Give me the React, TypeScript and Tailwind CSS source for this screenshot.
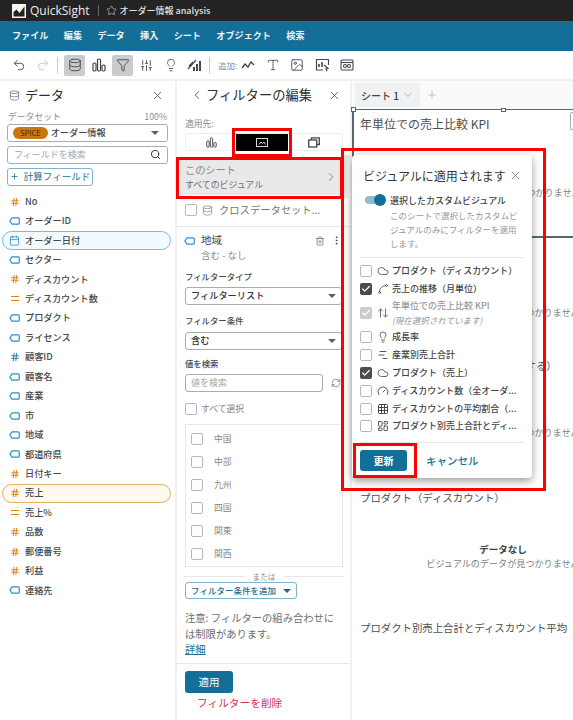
import {
  Undo2, Redo2, Database, Funnel, SlidersVertical, Lightbulb, Type, Image, X, ChevronLeft, ChevronRight,
  ChevronDown, Search, Plus, Trash2, EllipsisVertical, RefreshCw, Cloud, Gauge, Grid3x3, Check, Star,
  Hash, Calendar, ArrowUpDown, Spline, ChartNoAxesGantt, LayoutDashboard,
} from "lucide-react";

const fields = [
  { name: "No", kind: "hash" },
  { name: "オーダーID", kind: "tag" },
  { name: "オーダー日付", kind: "date" },
  { name: "セクター", kind: "tag" },
  { name: "ディスカウント", kind: "hash" },
  { name: "ディスカウント数", kind: "calc" },
  { name: "プロダクト", kind: "tag" },
  { name: "ライセンス", kind: "tag" },
  { name: "顧客ID", kind: "hashBlue" },
  { name: "顧客名", kind: "tag" },
  { name: "産業", kind: "tag" },
  { name: "市", kind: "tag" },
  { name: "地域", kind: "tag" },
  { name: "都道府県", kind: "tag" },
  { name: "日付キー", kind: "hash" },
  { name: "売上", kind: "hash" },
  { name: "売上%", kind: "calc" },
  { name: "品数", kind: "hash" },
  { name: "郵便番号", kind: "hash" },
  { name: "利益", kind: "hash" },
  { name: "連絡先", kind: "tag" },
];

const regions = ["中国", "中部", "九州", "四国", "関東", "関西"];

function TagIcon() {
  return (
    <svg width="11" height="8" viewBox="0 0 11 8" fill="none" className="shrink-0">
      <path d="M3 .8h6.2a1 1 0 0 1 1 1v4.4a1 1 0 0 1-1 1H3L.8 4z" stroke="#2e8fc4" strokeWidth="1.2" strokeLinejoin="round" />
    </svg>
  );
}

function FieldIcon({ kind }: { kind: string }) {
  if (kind === "tag") return <TagIcon />;
  if (kind === "hash") return <Hash size={10} strokeWidth={2.4} className="text-[#d9861e] shrink-0" />;
  if (kind === "hashBlue") return <Hash size={10} strokeWidth={2.4} className="text-[#2e7fb0] shrink-0" />;
  if (kind === "date") return <Calendar size={11} strokeWidth={1.7} className="text-[#2e8fc4] shrink-0" />;
  return <div className="w-[8px] h-[5px] border-y-[1.3px] border-[#d9861e] shrink-0" />;
}

function FieldRow({ name, kind }: { name: string; kind: string }) {
  const shape =
    name === "オーダー日付"
      ? "border border-[#7fbad9] bg-[#f3fafd]"
      : name === "売上"
        ? "border border-[#e8ad68] bg-[#fff9f0]"
        : "border border-transparent";
  return (
    <div className={`h-[19.45px] mx-[2px] w-[169px] flex items-center gap-[5px] pl-[6px] rounded-full text-[9.2px] font-medium text-[#45494d] ${shape}`}>
      <div className="w-[11px] flex justify-center shrink-0">
        <FieldIcon kind={kind} />
      </div>
      <span>{name}</span>
    </div>
  );
}

function Box({ on, muted }: { on?: boolean; muted?: boolean }) {
  if (on) {
    return (
      <div className={`w-[12px] h-[12px] rounded-[2px] flex items-center justify-center shrink-0 ${muted ? "bg-[#c9cbcc]" : "bg-[#4a4d50]"}`}>
        <Check size={10} strokeWidth={3} className="text-white" />
      </div>
    );
  }
  return <div className="w-[12px] h-[12px] rounded-[2px] border border-[#b5b8ba] bg-white shrink-0" />;
}

function Caret() {
  return <div className="w-0 h-0 border-x-[4px] border-x-transparent border-t-[4px] border-t-[#5b6065]" />;
}

function SelectBox({ label }: { label: string }) {
  return (
    <div className="h-[18px] w-[157px] border border-[#a9adb0] rounded-[3px] flex items-center justify-between pl-[5px] pr-[5px] text-[9.2px] font-medium text-[#33373a]">
      <span>{label}</span>
      <Caret />
    </div>
  );
}

function ChartBars({ size = 14, color = "#3f4448" }: { size?: number; color?: string }) {
  return (
    <svg width={size} height={size} viewBox="0 0 14 14" fill="none" stroke={color} strokeWidth="1.2">
      <rect x="1" y="5" width="3" height="8" rx="1.2" />
      <rect x="5.5" y="1" width="3" height="12" rx="1.2" />
      <rect x="10" y="7" width="3" height="6" rx="1.2" />
    </svg>
  );
}

function Toolbar() {
  const tool = "w-[21px] h-[21px] flex items-center justify-center rounded-[2px] text-[#45494d]";
  return (
    <div className="h-[28px] flex items-center bg-white pl-[12px] border-b-2 border-[#f0f1f1] box-content">
      <Undo2 size={14} strokeWidth={1.6} className="text-[#45494d]" />
      <Redo2 size={14} strokeWidth={1.6} className="text-[#c3c6c8] ml-[10px]" />
      <div className="w-px h-[17px] bg-[#c9cbcc] ml-[7px] mr-[6px]" />
      <div className={`${tool} bg-[#c9cbcc]`}><Database size={14} strokeWidth={1.6} /></div>
      <div className={`${tool} ml-[3px]`}><ChartBars /></div>
      <div className={`${tool} bg-[#c9cbcc] ml-[3px]`}><Funnel size={14} strokeWidth={1.6} /></div>
      <div className={`${tool} ml-[3px]`}><SlidersVertical size={13} strokeWidth={1.7} /></div>
      <div className={`${tool} ml-[3px]`}><Lightbulb size={14} strokeWidth={1.4} /></div>
      <div className={`${tool} ml-[2px]`}>
        <svg width="14" height="14" viewBox="0 0 14 14" fill="none" stroke="#45494d" strokeWidth="1.2">
          <path d="M1 11 9 2M2 8l4-4" />
          <path d="M7 13V9M10 13V6M13 13V3" strokeWidth="2" />
        </svg>
      </div>
      <div className="w-px h-[17px] bg-[#c9cbcc] ml-[5px] mr-[8px]" />
      <span className="text-[8.5px] text-[#8b8f92]">追加:</span>
      <div className="flex items-center gap-[10.5px] ml-[4px] text-[#45494d]">
        <svg width="14" height="14" viewBox="0 0 14 14" fill="none" stroke="#45494d" strokeWidth="1.4">
          <path d="M1 10 4 6l3 3 3-5 3 3" />
        </svg>
        <Type size={14} strokeWidth={1.4} />
        <Image size={14} strokeWidth={1.5} />
        <svg width="15" height="14" viewBox="0 0 15 14" fill="none" stroke="#45494d" strokeWidth="1.2">
          <path d="M8 12H1.5V1.5h12V7" />
          <path d="M4 9V6M7 9V4" strokeWidth="1.6" />
          <path d="M9 7l4 3.5-2 .4 1 2.3" />
        </svg>
        <svg width="14" height="12" viewBox="0 0 14 12" fill="none" stroke="#45494d" strokeWidth="1.1">
          <rect x="1" y="1" width="12" height="10" rx="1" />
          <path d="M1 3.5h12" />
          <rect x="3.5" y="5.5" width="3" height="3" rx="1.4" />
          <rect x="7.5" y="5.5" width="3" height="3" rx="1.4" />
        </svg>
      </div>
    </div>
  );
}

function DataPanel() {
  return (
    <aside className="w-[175px] shrink-0 bg-white pt-[4px]">
      <div className="flex items-center pl-[9px] pr-[11px] h-[20px]">
        <Database size={11} strokeWidth={1.4} className="text-[#55595c]" />
        <span className="ml-[5px] text-[13px] text-[#2c2f31]">データ</span>
        <X size={13} strokeWidth={1.4} className="ml-auto text-[#45494d]" />
      </div>
      <div className="flex justify-between items-center px-[8px] mt-[6px] text-[8.8px] leading-[12px] text-[#8b8f92]">
        <span>データセット</span>
        <span>100%</span>
      </div>
      <div className="mx-[7px] mt-[1px] h-[18px] border border-[#a9adb0] rounded-[3px] flex items-center pl-[5px] pr-[8px]">
        <span className="bg-[#c9770e] rounded-full h-[12px] px-[7px] text-[7.5px] leading-[12px] text-[#3a2a10]">SPICE</span>
        <span className="ml-[3px] text-[9.2px] font-medium text-[#44484b]">オーダー情報</span>
        <div className="ml-auto"><Caret /></div>
      </div>
      <div className="mx-[7px] mt-[3.5px] h-[18px] border border-[#a9adb0] rounded-[3px] flex items-center justify-between pl-[6px] pr-[6px]">
        <span className="text-[9px] text-[#a3a6a8]">フィールドを検索</span>
        <Search size={11} strokeWidth={2} className="text-[#26292b]" />
      </div>
      <div className="ml-[7px] mt-[4px] w-[86px] h-[18px] border border-[#7fb4cf] rounded-[3px] flex items-center justify-center gap-[5px] text-[9.5px] text-[#1e6d91]">
        <Plus size={9} strokeWidth={2} />
        <span>計算フィールド</span>
      </div>
      <div className="mt-[6.5px]">
        {fields.map((f) => (
          <FieldRow key={f.name} name={f.name} kind={f.kind} />
        ))}
      </div>
    </aside>
  );
}

function FilterPanel() {
  return (
    <section className="w-[175px] shrink-0 border-l-2 border-[#f0f1f1] bg-white">
      <div className="h-[20px] mt-[4px] flex items-center pl-[13px] pr-[9px]">
        <ChevronLeft size={14} strokeWidth={1.5} className="text-[#45494d]" />
        <span className="ml-[2px] text-[13.3px] text-[#2c2f31]">フィルターの編集</span>
        <X size={13} strokeWidth={1.4} className="ml-auto text-[#45494d]" />
      </div>
      <div className="ml-[8px] mt-[13px] text-[8.8px] leading-[12px] text-[#8b8f92]">適用先:</div>
      <div className="ml-[8px] w-[158px] h-[18px] mt-[3px] border border-[#eceeee] rounded-[3px] flex items-center">
        <div className="w-[50px] flex justify-center"><ChartBars size={11} /></div>
        <div className="w-[52px] h-[17px] bg-black flex items-center justify-center">
          <svg width="12" height="9" viewBox="0 0 12 9" fill="none" stroke="#d5d7d8" strokeWidth="1">
            <rect x=".5" y=".5" width="11" height="8" />
            <path d="M3 6.5l2-2.5 1.5 1.5L8 4l1.5 2.5" />
          </svg>
        </div>
        <div className="w-[52px] flex justify-center">
          <svg width="12" height="11" viewBox="0 0 12 11" fill="none" stroke="#3f4448" strokeWidth="1.3">
            <rect x=".7" y="3" width="8" height="7" />
            <path d="M3.5 3V.8h7.8V7.5H8.7" />
          </svg>
        </div>
      </div>
      <div className="ml-[3px] mt-[8px] w-[161px] h-[36px] bg-[#e9e9e9] flex items-center pl-[5px] pr-[3px]">
        <div className="-mt-[1px]">
          <div className="text-[10.2px] leading-[15px] text-[#85888b]">このシート</div>
          <div className="text-[8.9px] leading-[15px] text-[#6e7174]">すべてのビジュアル</div>
        </div>
        <ChevronRight size={14} strokeWidth={1.2} className="ml-auto text-[#55595c]" />
      </div>
      <div className="ml-[8px] mt-[8px] h-[14px] flex items-center gap-[5px] text-[10.3px] text-[#74777a]">
        <Box />
        <Database size={11} strokeWidth={1.4} />
        <span className="ml-[1px]">クロスデータセット...</span>
      </div>
      <div className="h-px bg-[#e6e7e8] mt-[9px]" />
      <div className="ml-[7px] mt-[6px] flex items-start pr-[8px]">
        <div className="mt-[4px]"><TagIcon /></div>
        <div className="ml-[6px] text-[#3f4448]">
          <div className="text-[10.5px] leading-[14px]">地域</div>
          <div className="text-[9.5px] leading-[14px] text-[#85888b] mt-[1px]">含む - なし</div>
        </div>
        <Trash2 size={10} strokeWidth={1.6} className="ml-auto mt-[3px] text-[#5b6065]" />
        <EllipsisVertical size={11} strokeWidth={2} className="ml-[6px] mt-[2px] text-[#45494d]" />
      </div>
      <div className="ml-[8px] mt-[8px] text-[8.4px] font-medium leading-[13px] text-[#45494d]">フィルタータイプ</div>
      <div className="ml-[8px] mt-[4px]"><SelectBox label="フィルターリスト" /></div>
      <div className="ml-[8px] mt-[9px] text-[8.4px] font-medium leading-[13px] text-[#45494d]">フィルター条件</div>
      <div className="ml-[8px] mt-[5px]"><SelectBox label="含む" /></div>
      <div className="ml-[8px] mt-[7px] text-[8.4px] font-medium leading-[13px] text-[#45494d]">値を検索</div>
      <div className="ml-[8px] mt-[4px] flex items-center">
        <div className="w-[138px] h-[18px] border border-[#a9adb0] rounded-[3px] pl-[5px] text-[9px] leading-[16px] text-[#a3a6a8]">値を検索</div>
        <RefreshCw size={10} strokeWidth={1.6} className="ml-[8px] text-[#5b6065]" />
      </div>
      <div className="ml-[8px] mt-[10px] h-[14px] flex items-center gap-[4px] text-[8.8px] text-[#85888b]">
        <Box />
        <span>すべて選択</span>
      </div>
      <div className="ml-[8px] mt-[8px] w-[158px] h-[143px] border border-[#e6e7e8] pt-[2px]">
        {regions.map((r) => (
          <div key={r} className="h-[23px] flex items-center pl-[5px] gap-[11px] text-[8.8px] text-[#85888b]">
            <Box />
            <span>{r}</span>
          </div>
        ))}
      </div>
      <div className="ml-[6px] mt-[5px] w-[162px] h-[9px] flex items-center gap-[8px] text-[7.5px] text-[#85888b]">
        <div className="flex-1 h-px bg-[#e6e7e8]" />
        <span>または</span>
        <div className="flex-1 h-px bg-[#e6e7e8]" />
      </div>
      <div className="ml-[8px] mt-[1px] w-[112px] h-[17px] border border-[#7fb4cf] rounded-[3px] flex items-center justify-center gap-[7px] text-[8.5px] font-medium text-[#1e6d91]">
        <span>フィルター条件を追加</span>
        <div className="w-0 h-0 border-x-[4px] border-x-transparent border-t-[4px] border-t-[#1e6d91]" />
      </div>
      <div className="ml-[8px] mt-[11px] text-[10.3px] leading-[16px] text-[#6b6e71] whitespace-nowrap">
        注意: フィルターの組み合わせに<br />は制限があります。
        <div className="-mt-[1.5px] text-[#1e6d91] underline">詳細</div>
      </div>
      <div className="h-px bg-[#e6e7e8] mt-[6px]" />
      <div className="ml-[8px] mt-[7px] w-[48px] h-[22px] bg-[#136f97] rounded-[3px] text-center text-[10.5px] leading-[22px] text-white">適用</div>
      <div className="ml-[20px] mt-[2.5px] text-[10.7px] leading-[16px] text-[#d13254]">フィルターを削除</div>
    </section>
  );
}

function Visual({ title, height, top, selected }: { title: string; height: number; top: number; selected?: boolean }) {
  return (
    <div
      className={`w-[302px] shrink-0 ${selected ? "border-l-2 border-t border-b-2 border-[#56676f]" : ""}`}
      style={{ height }}
    >
      <div className={`whitespace-nowrap ${selected ? "pl-[6px] pt-[5px] text-[12px] leading-[18px]" : "pl-[8px] pt-[5px] text-[10.4px] leading-[15px]"} text-[#4a4e52]`}>
        {title}
      </div>
      {top > 0 && (
        <div className="text-center" style={{ marginTop: top }}>
          <div className="text-[9.5px] leading-[14px] font-bold text-[#3a4046]">データなし</div>
          <div className="text-[9.1px] leading-[15px] text-[#7b8186] whitespace-nowrap">ビジュアルのデータが見つかりません</div>
        </div>
      )}
    </div>
  );
}

function Canvas() {
  return (
    <main className="flex-1 min-w-0 overflow-hidden border-l-2 border-[#f0f1f1] bg-white">
      <div className="h-[28px] bg-[#fafafa] pt-[2px] pl-[3px] flex items-start">
        <div className="w-[65px] h-[24px] bg-[#f0f1f2] flex items-center justify-center gap-[3px] text-[10px] font-medium text-[#3f4448]">
          <span>シート 1</span>
          <ChevronDown size={12} strokeWidth={1.2} className="text-[#85888b]" />
        </div>
        <Plus size={12} strokeWidth={1.3} className="ml-[6px] mt-[6px] text-[#a3a6a8]" />
      </div>
      <div className="flex flex-col">
        <Visual selected title="年単位での売上比較 KPI" height={129} top={38} />
        <Visual title="成長率" height={115} top={33} />
        <Visual title="ディスカウント数（全オーダーに対する）" height={132} top={38} />
        <Visual title="プロダクト（ディスカウント）" height={130} top={37} />
        <Visual title="プロダクト別売上合計とディスカウント平均" height={104} top={0} />
      </div>
    </main>
  );
}

type VisualRow = { label: string; sub?: string; on?: boolean; muted?: boolean; icon: React.ReactNode };

const visualRows: VisualRow[] = [
  { label: "プロダクト（ディスカウント）", icon: <Cloud size={12} strokeWidth={1.6} /> },
  { label: "売上の推移（月単位）", on: true, icon: <Spline size={12} strokeWidth={1.6} /> },
  { label: "年単位での売上比較 KPI", sub: "(現在選択されています)", on: true, muted: true, icon: <ArrowUpDown size={12} strokeWidth={1.8} /> },
  { label: "成長率", icon: <Lightbulb size={12} strokeWidth={1.6} /> },
  { label: "産業別売上合計", icon: <ChartNoAxesGantt size={12} strokeWidth={1.8} /> },
  { label: "プロダクト（売上）", on: true, icon: <Cloud size={12} strokeWidth={1.6} /> },
  { label: "ディスカウント数（全オーダ...", icon: <Gauge size={12} strokeWidth={1.8} /> },
  { label: "ディスカウントの平均割合（...", icon: <Grid3x3 size={12} strokeWidth={2} /> },
  { label: "プロダクト別売上合計とディ...", icon: <LayoutDashboard size={12} strokeWidth={1.8} /> },
];

function VisualPopup() {
  return (
    <div className="absolute left-[352px] top-[155px] w-[180px] h-[323px] bg-white rounded-[4px] shadow-[0_3px_8px_rgba(0,0,0,0.4)] px-[8px]">
      <div className="flex items-start h-[27px] pt-[12px] pl-[3px]">
        <span className="text-[12px] leading-[18px] text-[#33373a] whitespace-nowrap">ビジュアルに適用されます</span>
        <X size={13} strokeWidth={1.2} className="ml-[3px] mt-[2px] text-[#55595c] shrink-0" />
      </div>
      <div className="flex mt-[12px]">
        <div className="relative w-[21px] h-[12px] ml-[5px] shrink-0">
          <div className="absolute left-0 top-[2px] w-[20px] h-[8px] rounded-full bg-[#8cbcd2]" />
          <div className="absolute right-0 top-0 w-[12px] h-[12px] rounded-full bg-[#136f97]" />
        </div>
        <div className="ml-[4px]">
          <div className="text-[9px] font-medium leading-[14px] text-[#3f4448]">選択したカスタムビジュアル</div>
          <div className="text-[8.5px] leading-[14px] text-[#94979a] w-[128px]">このシートで選択したカスタムビジュアルのみにフィルターを適用します。</div>
        </div>
      </div>
      <div className="h-px bg-[#e6e7e8] mt-[7px]" />
      <div className="mt-[4px]">
        {visualRows.map((r) => (
          <div key={r.label} className={`flex items-center ${r.sub ? "h-[31px]" : "h-[17.8px]"}`}>
            <Box on={r.on} muted={r.muted} />
            <div className={`ml-[5px] w-[12px] flex justify-center shrink-0 ${r.muted ? "text-[#5b6065]" : "text-[#45494d]"}`}>{r.icon}</div>
            <div className="ml-[3px] whitespace-nowrap">
              <div className={`text-[9px] font-medium leading-[14px] ${r.muted ? "text-[#94979a]" : "text-[#3f4448]"}`}>{r.label}</div>
              {r.sub && <div className="text-[8.5px] leading-[14px] italic text-[#94979a]">{r.sub}</div>}
            </div>
          </div>
        ))}
      </div>
      <div className="h-px bg-[#e6e7e8] mt-[7px]" />
      <div className="flex items-center mt-[7px]">
        <div className="w-[47px] h-[21px] bg-[#136f97] rounded-[3px] text-center text-[10px] leading-[21px] font-bold text-white">更新</div>
        <span className="ml-[19px] text-[10.5px] font-medium text-[#1e6d91]">キャンセル</span>
      </div>
    </div>
  );
}

export default function App() {
  return (
    <div className="relative w-[573px] h-[720px] overflow-hidden bg-white font-['Noto_Sans_CJK_JP','Noto_Sans',sans-serif]">
      <header className="h-[21px] bg-[#232323] flex items-center pl-[12px] text-white">
        <svg width="14" height="14" viewBox="0 0 14 14" className="shrink-0">
          <rect width="14" height="14" fill="#f4f4f4" />
          <path d="M1.5 12.5V8l3-2.5 3 3.5 5-6.5v10z" fill="#232323" />
        </svg>
        <span className="ml-[4px] text-[12px] text-[#ececec] font-['Open_Sans',sans-serif]">QuickSight</span>
        <div className="w-px h-[11px] bg-[#666] ml-[8px] mr-[7px]" />
        <Star size={11} strokeWidth={1.4} className="text-[#d0d0d0]" />
        <span className="ml-[3px] text-[9px] font-medium text-[#e0e0e0]">オーダー情報 analysis</span>
      </header>
      <nav className="h-[30px] bg-[#136f97] flex items-center pl-[12px] gap-[15.4px] text-[9.1px] font-bold text-[#eaf3f7]">
        {["ファイル", "編集", "データ", "挿入", "シート", "オブジェクト", "検索"].map((m) => (
          <span key={m}>{m}</span>
        ))}
      </nav>
      <Toolbar />
      <div className="flex h-[639px]">
        <DataPanel />
        <FilterPanel />
        <Canvas />
      </div>
      <VisualPopup />
      <div className="absolute left-[344px] top-[155px] w-[6px] h-[43px] bg-[#dfe0e0]" />
      <div className="absolute left-[351px] top-[107px] w-[5px] h-[5px] border border-[#56676f] bg-white" />
      <div className="absolute left-[501px] top-[108px] w-[5px] h-[4px] border border-[#56676f] bg-white" />
      <div className="absolute left-[570px] top-[112px] w-[6px] h-[18px] border border-[#a9adb0] rounded-[2px] bg-white" />
      <div className="absolute left-[232px] top-[128px] w-[60px] h-[29px] border-[3px] border-[#ff0000]" />
      <div className="absolute left-[176px] top-[157px] w-[167px] h-[42px] border-[3px] border-[#ff0000]" />
      <div className="absolute left-[341px] top-[148px] w-[205px] h-[343px] border-[3px] border-[#ff0000]" />
      <div className="absolute left-[353px] top-[443px] w-[64px] h-[35px] border-[3px] border-[#ff0000]" />
    </div>
  );
}
